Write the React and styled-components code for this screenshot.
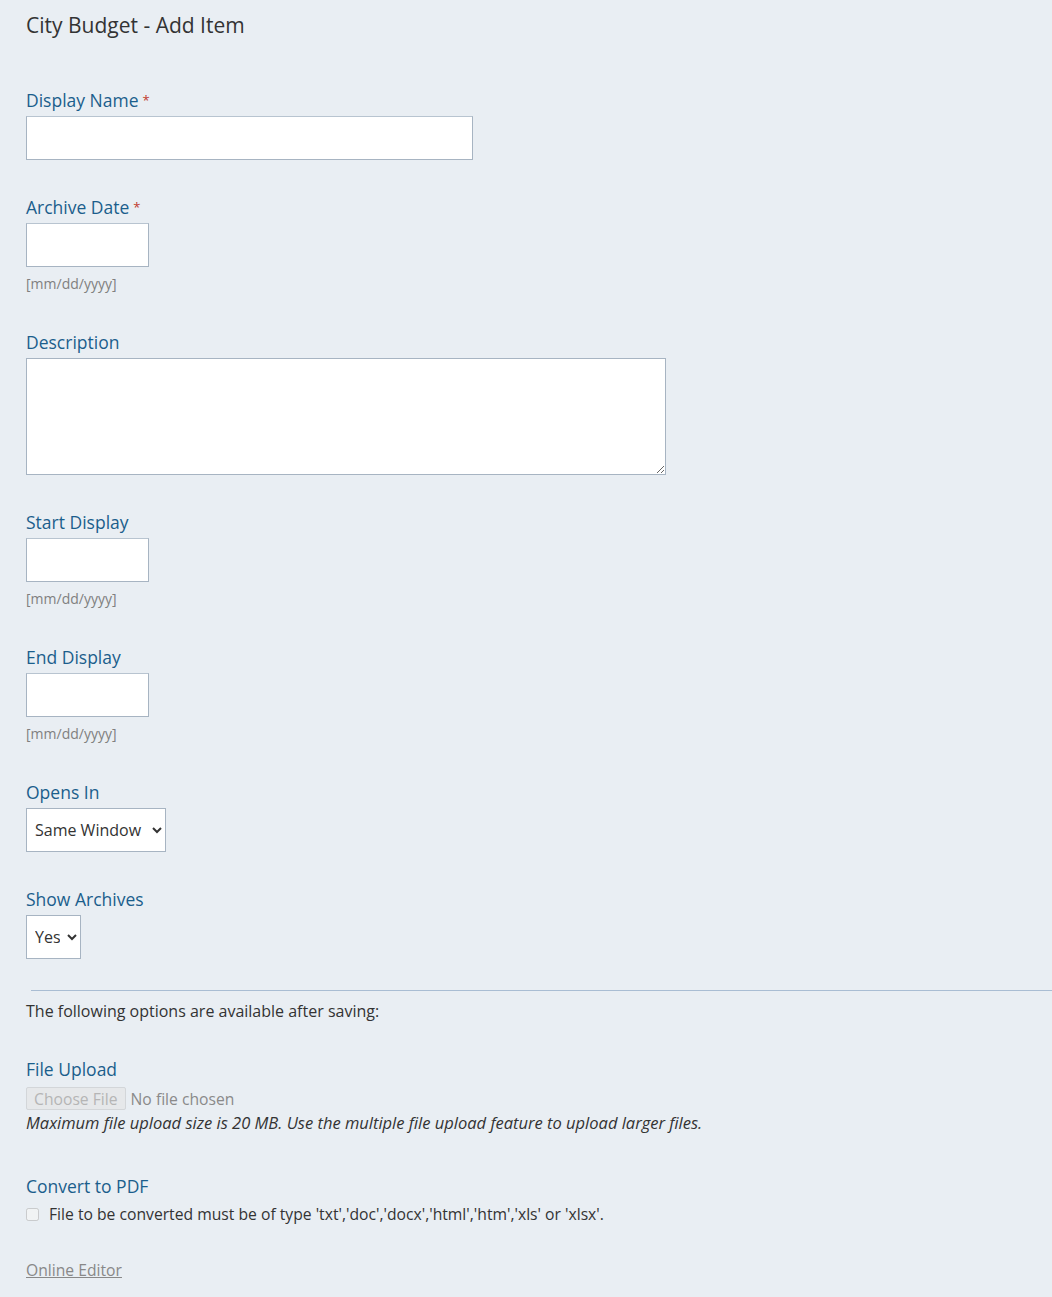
import React from "react";
import styled, { createGlobalStyle } from "styled-components";

const GlobalStyle = createGlobalStyle`
  html, body {
    margin: 0;
    padding: 0;
    background: #e9eef3;
  }
  body {
    font-family: "Open Sans", "Noto Sans", sans-serif;
    color: #333;
  }
`;

export default function App() {
  return (
    <>
      <GlobalStyle />
      <Page>
        <Title>City Budget - Add Item</Title>

        <Field>
          <Label>
            Display Name<Req>*</Req>
          </Label>
          <TextInput $width={447} />
        </Field>

        <Field>
          <Label>
            Archive Date<Req>*</Req>
          </Label>
          <TextInput $width={123} />
          <Hint>[mm/dd/yyyy]</Hint>
        </Field>

        <Field>
          <Label>Description</Label>
          <TextArea />
        </Field>

        <Field>
          <Label>Start Display</Label>
          <TextInput $width={123} />
          <Hint>[mm/dd/yyyy]</Hint>
        </Field>

        <Field>
          <Label>End Display</Label>
          <TextInput $width={123} />
          <Hint>[mm/dd/yyyy]</Hint>
        </Field>

        <Field>
          <Label>Opens In</Label>
          <Select $width={140} defaultValue="same">
            <option value="same">Same Window</option>
            <option value="new">New Window</option>
          </Select>
        </Field>

        <Field>
          <Label>Show Archives</Label>
          <Select $width={55} defaultValue="yes">
            <option value="yes">Yes</option>
            <option value="no">No</option>
          </Select>
        </Field>

        <Divider />
        <Note>The following options are available after saving:</Note>

        <Field $gap={43}>
          <Label>File Upload</Label>
          <FileRow>
            <FileButton disabled>Choose File</FileButton>
            <span>No file chosen</span>
          </FileRow>
          <Italic>
            Maximum file upload size is 20 MB. Use the multiple file upload
            feature to upload larger files.
          </Italic>
        </Field>

        <Field $gap={35}>
          <Label>Convert to PDF</Label>
          <CheckRow>
            <Check type="checkbox" disabled />
            <span>
              File to be converted must be of type
              'txt','doc','docx','html','htm','xls' or 'xlsx'.
            </span>
          </CheckRow>
        </Field>

        <EditorLink href="#">Online Editor</EditorLink>
      </Page>
    </>
  );
}

const Page = styled.div`
  padding: 12px 0 24px 26px;
`;

const Title = styled.h1`
  margin: 0 0 52px;
  font-size: 21px;
  font-weight: 400;
  line-height: 26px;
  color: #333;
`;

const Field = styled.div`
  display: flex;
  flex-direction: column;
  align-items: flex-start;
  margin-bottom: ${(p) => p.$gap || 37}px;
`;

const Label = styled.label`
  display: block;
  font-size: 17.5px;
  line-height: 20px;
  color: #1b5e8c;
  margin-bottom: 6px;
`;

const Req = styled.span`
  color: #c0392b;
  font-size: 13px;
  margin-left: 4px;
  vertical-align: top;
`;

const TextInput = styled.input.attrs({ type: "text" })`
  box-sizing: border-box;
  width: ${(p) => p.$width}px;
  height: 44px;
  margin: 0;
  background: #fff;
  border: 1px solid #a7b4c2;
  border-top-color: #b8c4d0;
  border-radius: 0;
  outline: none;
`;

const TextArea = styled.textarea`
  box-sizing: border-box;
  width: 640px;
  height: 117px;
  margin: 0;
  background: #fff;
  border: 1px solid #a7b4c2;
  border-radius: 0;
`;

const Hint = styled.div`
  margin: 7px 0 1px;
  font-size: 14px;
  line-height: 20px;
  color: #808080;
`;

const Select = styled.select`
  box-sizing: border-box;
  width: ${(p) => p.$width}px;
  height: 44px;
  padding: 0 4px;
  margin: 0;
  background: #fff;
  border: 1px solid #a7b4c2;
  border-radius: 0;
  font-family: "Open Sans", "Noto Sans", sans-serif;
  font-size: 16px;
  color: #333;
`;

const Divider = styled.hr`
  margin: -6px 0 0 5px;
  border: 0;
  border-top: 1px solid #a9bdd3;
`;

const Note = styled.p`
  margin: 11px 0 39px;
  font-size: 16px;
  line-height: 18px;
  color: #333;
`;

const FileRow = styled.div`
  display: flex;
  align-items: center;
  gap: 5px;
  margin-top: 2px;
  font-size: 15.7px;
  color: #8a8a8a;
`;

const FileButton = styled.button`
  height: 23px;
  padding: 0 7px;
  font-family: inherit;
  font-size: 15.7px;
  color: #b5b5b5;
  background: #e6e8ea;
  border: 1px solid #d3d6d9;
  border-radius: 2px;
`;

const Italic = styled.div`
  margin-top: 3px;
  font-size: 16.5px;
  font-style: italic;
  line-height: 20px;
  color: #333;
`;

const CheckRow = styled.div`
  display: flex;
  align-items: center;
  gap: 10px;
  margin-top: 2px;
  font-size: 15.7px;
  line-height: 20px;
  color: #333;
`;

const Check = styled.input`
  margin: 0;
  width: 13px;
  height: 13px;
`;

const EditorLink = styled.a`
  display: inline-block;
  font-size: 15.7px;
  line-height: 20px;
  color: #888;
  text-decoration: underline;
`;
